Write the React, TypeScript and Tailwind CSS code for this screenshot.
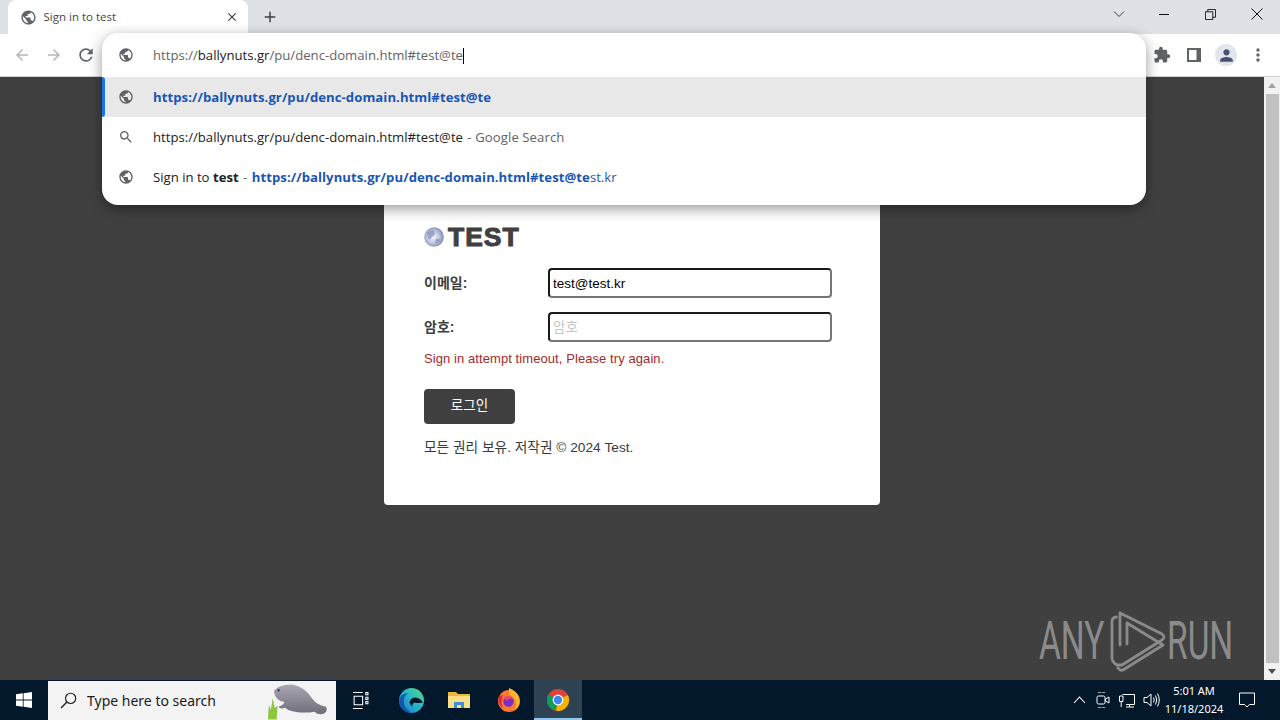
import React from "react";
import { MdPublic, MdSearch, MdExtension, MdPerson, MdArrowBack, MdArrowForward, MdRefresh, MdMoreVert, MdClose, MdAdd } from "react-icons/md";

const ui = "font-['Open_Sans','Noto_Sans',sans-serif]";
const page = "font-['Liberation_Sans','Noto_Sans_CJK_KR',sans-serif]";

function Field({ label, value, placeholder }: { label: string; value?: string; placeholder?: string }) {
  return (
    <div className="flex items-center h-[30px]">
      <label className="w-[124px] text-[14px] font-bold text-[#404040]">{label}</label>
      <input
        readOnly
        value={value ?? ""}
        placeholder={placeholder}
        className="w-[284px] h-[30px] px-[3px] rounded-[4px] border-2 border-t-[#1a1a1a] border-l-[#1a1a1a] border-r-[#767676] border-b-[#767676] text-[13.5px] text-black placeholder:text-[#c4c4c4] bg-white outline-none"
      />
    </div>
  );
}

function Row({ selected, icon, children }: { selected?: boolean; icon: React.ReactNode; children: React.ReactNode }) {
  return (
    <div className={`relative flex items-center h-10 pl-[16px] ${selected ? "bg-[#e8e8e8]" : ""}`}>
      {selected && <div className="absolute left-0 top-0 bottom-0 w-[3px] bg-[#1a73e8] rounded-r-[3px]" />}
      <span className="w-[35px] text-[#5f6368] text-[16px] flex">{icon}</span>
      <div className="pt-[2px] text-[13.15px] text-[#202124] whitespace-nowrap">{children}</div>
    </div>
  );
}

function Chrome() {
  return (
    <svg viewBox="0 0 24 24" className="w-[24px] h-[24px]">
      <circle cx="12" cy="12" r="11" fill="#db4437" />
      <path d="M12 12 L2.5 6.5 A11 11 0 0 0 10 22.8 Z" fill="#0f9d58" />
      <path d="M12 12 L21.8 7 A11 11 0 0 1 10 22.8 Z" fill="#f4b400" />
      <circle cx="12" cy="12" r="5.4" fill="#fff" />
      <circle cx="12" cy="12" r="4.2" fill="#4285f4" />
    </svg>
  );
}

export default function App() {
  return (
    <div className={`relative w-[1280px] h-[720px] overflow-hidden flex flex-col bg-[#404040] ${ui}`}>
      {/* Tab strip */}
      <div className="h-[34px] bg-[#dee1e6] flex items-start pl-2 shrink-0">
        <div className="w-[240px] h-[34px] bg-white rounded-t-[8px] flex items-center pl-3 pr-[10px] text-[#45474a]">
          <MdPublic className="w-[17px] h-[17px] text-[#5f6368] -ml-[0.5px]" />
          <span className="ml-[7px] text-[11.5px] flex-1">Sign in to test</span>
          <MdClose className="w-[14px] h-[14px] text-[#3c4043] mr-[-1px]" />
        </div>
        <MdAdd className="ml-[13px] mt-[8px] w-[18px] h-[18px] text-[#3c4043]" />
        <div className="flex-1" />
        <div className="flex items-center h-[28px] text-[#202124]">
          <svg viewBox="0 0 12 12" className="w-[12px] h-[12px] mr-[33px]"><path d="M1 3.5 L6 8.5 L11 3.5" fill="none" stroke="#3c4043" strokeWidth="1" /></svg>
          <svg viewBox="0 0 12 12" className="w-[12px] h-[12px] mr-[35px]"><path d="M1 6.5 H11" stroke="#111" strokeWidth="1" /></svg>
          <svg viewBox="0 0 12 12" className="w-[11px] h-[11px] mr-[35px]"><path d="M.5 3 H8.5 V11.5 H.5 Z M3 3 V.5 H11.5 V9 H8.5" fill="none" stroke="#111" strokeWidth="1" /></svg>
          <svg viewBox="0 0 12 12" className="w-[12px] h-[12px] mr-[17px]"><path d="M.5 .5 L11.5 11.5 M11.5 .5 L.5 11.5" stroke="#111" strokeWidth="1" /></svg>
        </div>
      </div>

      {/* Toolbar */}
      <div className="h-[43px] bg-white border-b border-[#d0d2d6] flex items-center shrink-0 pl-[13px] pr-[12px] text-[#5f6368]">
        <MdArrowBack className="w-[18px] h-[18px] text-[#b4b6ba]" />
        <MdArrowForward className="ml-[14px] w-[18px] h-[18px] text-[#b4b6ba]" />
        <MdRefresh className="ml-[13px] w-[20px] h-[20px] text-[#5f6368]" />
        <div className="flex-1" />
        <MdExtension className="w-[18px] h-[18px]" />
        <svg viewBox="0 0 14 14" className="ml-[16px] w-[14px] h-[14px]"><path fillRule="evenodd" d="M0 0 H14 V14 H0 Z M2 2 V12 H9.5 V2 Z" fill="#5f6368" /></svg>
        <div className="ml-[14px] w-[22px] h-[22px] rounded-full bg-[#e3e5ec] flex items-center justify-center">
          <MdPerson className="w-[19px] h-[19px] text-[#4a5070]" />
        </div>
        <MdMoreVert className="ml-[11px] w-[20px] h-[20px]" />
      </div>

      {/* Page + scrollbar */}
      <div className="flex-1 flex min-h-0">
        <div className={`flex-1 overflow-hidden flex flex-col items-center ${page}`}>
          <div className="mt-[100px] w-[496px] h-[328px] bg-white rounded-[4px] px-10 pt-[49px] shrink-0">
            <div className="flex items-center h-[22px]">
              <svg viewBox="0 0 20 20" className="w-[20px] h-[20px]">
                <defs>
                  <radialGradient id="g" cx="45%" cy="50%" r="55%"><stop offset="0%" stopColor="#f4f5fb" /><stop offset="55%" stopColor="#c3c8e0" /><stop offset="100%" stopColor="#8088b4" /></radialGradient>
                </defs>
                <circle cx="10" cy="10" r="9.8" fill="url(#g)" />
                <path d="M3 6 Q7 2 10 4 Q12 8 8 10 Q6 14 4 11 Z M12 12 Q15 11 16 13 Q14 17 11 16 Z" fill="#7f87ad" opacity=".65" />
              </svg>
              <span className="ml-[4px] text-[26.5px] font-['Liberation_Sans',sans-serif] font-bold text-[#404040] leading-none [-webkit-text-stroke:1px_#404040] tracking-[1px]">TEST</span>
            </div>
            <div className="mt-[20px] flex flex-col gap-[14px]">
              <Field label="이메일:" value="test@test.kr" />
              <Field label="암호:" placeholder="암호" />
            </div>
            <div className="mt-[9px] text-[13px] leading-[15px] text-[#a52a2a] tracking-[0.08px]">Sign in attempt timeout, Please try again.</div>
            <button className="mt-[23px] block w-[91px] h-[35px] rounded-[4px] bg-[#404040] text-white text-[13.5px]">로그인</button>
            <div className="mt-[16px] text-[13.7px] leading-[16px] text-[#3a3a3a]">모든 권리 보유. 저작권 © 2024 Test.</div>
          </div>
        </div>
        {/* Scrollbar */}
        <div className="w-4 bg-[#f1f1f1] flex flex-col items-center shrink-0">
          <div className="h-[17px] flex items-center justify-center"><div className="border-x-[4px] border-x-transparent border-b-[5px] border-b-[#a3a3a3]" /></div>
          <div className="w-[13px] flex-1 bg-[#c1c1c1]" />
          <div className="h-[17px] flex items-center justify-center"><div className="border-x-[4px] border-x-transparent border-t-[5px] border-t-[#505050]" /></div>
        </div>
      </div>

      {/* Taskbar */}
      <div className="h-10 bg-[#04182b] flex items-center shrink-0 text-white">
        <div className="w-12 flex justify-center">
          <svg viewBox="0 0 16 16" className="w-[16px] h-[16px]"><path d="M0 2.3 L6.8 1.3 V7.5 H0 Z M7.6 1.2 L16 0 V7.5 H7.6 Z M0 8.4 H6.8 V14.7 L0 13.7 Z M7.6 8.4 H16 V16 L7.6 14.8 Z" fill="#fff" /></svg>
        </div>
        <div className="relative w-[288px] h-[39px] mt-[1px] bg-[#f3f3f3] flex items-center pl-[12px] text-[#1b1b1b] overflow-hidden">
          <svg viewBox="0 0 16 16" className="w-[17px] h-[17px]"><circle cx="10" cy="6" r="4.8" fill="none" stroke="#222" strokeWidth="1.1" /><path d="M6.5 9.5 L1 15" stroke="#222" strokeWidth="1.3" /></svg>
          <span className="ml-[10px] text-[14px] font-['Noto_Sans',sans-serif]">Type here to search</span>
          <svg viewBox="0 0 66 39" className="absolute left-[218px] top-0 w-[64px] h-[39px]">
            <defs>
              <linearGradient id="m" x1="0" y1="0" x2="0" y2="1"><stop offset="0%" stopColor="#a9a7b2" /><stop offset="100%" stopColor="#6f6d78" /></linearGradient>
            </defs>
            <path d="M2 39 L3 24 L5 29 L7 17 L9 27 L12 25 L11 39 Z" fill="#8ec641" />
            <path d="M8 10 Q12 3 27 3 Q40 5 48 18 Q52 24 62 26 Q64 30 60 33 Q54 35 50 31 Q40 33 30 31 Q22 30 20 27 Q14 29 13 26 Q18 24 19 21 Q10 20 8 10 Z" fill="url(#m)" />
            <circle cx="13" cy="9" r="1.2" fill="#2b2b33" />
          </svg>
        </div>
        <div className="w-[48px] flex justify-center">
          <svg viewBox="0 0 16 16" className="w-[17px] h-[17px]"><path d="M1 .5 H10 M1 15.5 H10 M2 4 H10 V12 H2 Z M13 .5 H15 V2.5 H13 Z M13 5 H15 V7 H13 Z M13 9 H15 V11 H13 Z" fill="none" stroke="#fff" strokeWidth="1" /></svg>
        </div>
        <div className="w-[50px] ml-[2px] flex justify-center">
          <svg viewBox="0 0 24 24" className="w-[25px] h-[25px]">
            <defs>
              <linearGradient id="e" x1="1" y1="0" x2="0" y2="1"><stop offset="0%" stopColor="#5fdc7a" /><stop offset="45%" stopColor="#27b8c8" /><stop offset="100%" stopColor="#1673d0" /></linearGradient>
            </defs>
            <circle cx="12" cy="12" r="12" fill="url(#e)" />
            <path d="M10 14 Q11 9 16 9 Q21 10 23 14 Q18 15 15 14 Q12 15 13 18 Q11 17 10 14 Z" fill="#04182b" />
            <path d="M0 13 Q1 5 9 5 Q3 8 5 16 Q7 21 13 24 Q2 24 0 13 Z" fill="#1258a8" />
          </svg>
        </div>
        <div className="w-[46px] flex justify-center">
          <svg viewBox="0 0 22 20" className="w-[22px] h-[20px]">
            <path d="M0 2 H8 L10 4 H22 V18 H0 Z" fill="#e9b93a" />
            <path d="M0 6 H22 V18 H0 Z" fill="#fbdf86" />
            <path d="M6 12 H16 V18 H13 V15 H9 V18 H6 Z" fill="#3f8fd6" />
          </svg>
        </div>
        <div className="w-[52px] pl-[1px] flex justify-center">
          <svg viewBox="0 0 24 24" className="w-[24px] h-[24px]">
            <circle cx="12" cy="13" r="11" fill="#ff7a2b" />
            <path d="M12 0 Q20 3 22 10 Q24 18 18 22 Q22 12 12 6 Z" fill="#ffb52e" />
            <path d="M2 8 Q0 16 6 21 Q3 13 6 7 Z" fill="#e3254f" />
            <circle cx="11.5" cy="13.5" r="5.2" fill="#7a2fc4" />
            <path d="M7 9 Q12 6 16 11 Q11 10 9 13 Z" fill="#f3486d" />
          </svg>
        </div>
        <div className="relative w-[48px] h-10 bg-[#2e4253] flex items-center justify-center">
          <Chrome />
          <div className="absolute bottom-0 left-0 right-0 h-[2px] bg-[#8fc6ee]" />
        </div>
        <div className="flex-1" />
        {/* Tray */}
        <svg viewBox="0 0 12 8" className="w-[13px] h-[8px] mr-[9px]"><path d="M.5 7 L6 1 L11.5 7" fill="none" stroke="#fff" strokeWidth="1.1" /></svg>
        <svg viewBox="0 0 16 16" className="w-[16px] h-[16px] mr-[8px]"><path d="M3 .5 Q7 -.5 10 .5 M3 15.5 Q7 16.5 10 15.5" fill="none" stroke="#fff" strokeWidth=".8" /><rect x="2" y="4" width="8" height="8" rx="1.5" fill="none" stroke="#fff" /><path d="M10.5 7 L14 5 V11 L10.5 9 Z" fill="none" stroke="#fff" /></svg>
        <svg viewBox="0 0 16 16" className="w-[16px] h-[16px] mr-[8px]"><path d="M3.5 2.5 H15.5 V12.5 H7 M7 15 H15 M10.5 12.5 V15 M.5 4 H4 V9.5 H.5 Z M2.2 9.5 V15" fill="none" stroke="#fff" strokeWidth="1" /></svg>
        <svg viewBox="0 0 18 16" className="w-[18px] h-[16px] mr-[1px]"><path d="M1 5.5 H4 L8 2 V14 L4 10.5 H1 Z M10.5 5.5 Q12 8 10.5 10.5 M12.5 3.5 Q15 8 12.5 12.5 M14.5 1.5 Q18 8 14.5 14.5" fill="none" stroke="#fff" strokeWidth="1" /></svg>
        <div className="w-[64px] text-center text-[11px] leading-[18px] font-['Noto_Sans',sans-serif]">
          <div>5:01 AM</div>
          <div>11/18/2024</div>
        </div>
        <svg viewBox="0 0 16 16" className="ml-[13px] mr-[25px] w-[16px] h-[16px]"><path d="M.5 1 H15.5 V12.5 H10.5 L8 15 L5.5 12.5 H.5 Z" fill="none" stroke="#fff" strokeWidth="1" /></svg>
      </div>

      {/* Omnibox popup */}
      <div className="absolute left-[102px] top-[33px] w-[1044px] h-[172px] bg-white rounded-[16px] shadow-[0_4px_14px_rgba(0,0,0,0.4)] overflow-hidden">
        <div className="flex items-center h-11 pl-[16px]">
          <span className="w-[35px] text-[#5f6368] text-[16px] flex"><MdPublic /></span>
          <div className="pt-[2px] text-[13.15px] text-[#5f6368] whitespace-nowrap flex items-center">
            <span>https://</span><span className="text-[#202124]">ballynuts.gr</span><span>/pu/denc-domain.html#test@te</span>
            <span className="inline-block w-px h-[16px] bg-black" />
          </div>
        </div>
        <Row selected icon={<MdPublic />}>
          <span className="font-bold text-[#1a56b4] tracking-[0.05px]">https://ballynuts.gr/pu/denc-domain.html#test@te</span>
        </Row>
        <Row icon={<MdSearch />}>
          https://ballynuts.gr/pu/denc-domain.html#test@te <span className="text-[#5f6368] ml-[1px] tracking-[0.08px]">- Google Search</span>
        </Row>
        <Row icon={<MdPublic />}>
          Sign in to <b>test</b> <span className="text-[#5f6368] mx-[1px]">-</span> <span className="font-bold text-[#1a56b4] tracking-[0.05px]">https://ballynuts.gr/pu/denc-domain.html#test@te</span><span className="text-[#1a56b4]">st.kr</span>
        </Row>
      </div>

      {/* Watermark */}
      <div className="absolute left-[1030px] top-[606px] w-[210px] h-[70px] flex items-center pointer-events-none text-[#8b8b8b] font-['Roboto',sans-serif]">
        <span className="text-[54px] font-normal leading-none origin-left scale-x-[.62] ml-[9px]">ANY</span>
        <svg viewBox="0 0 56 62" className="absolute left-[80px] top-[4px] w-[56px] h-[62px]">
          <path d="M10 3 V35 M10 3 L52 24 Q56 27 52 30 L12 55 M17 13 V34 M17 13 L53 35 L13 60 Q10 61 8 58 M6.5 7 Q2 7 2 12 V48 Q2 52 7 55 L12 55" fill="none" stroke="#8b8b8b" strokeWidth="2.8" strokeLinejoin="round" strokeLinecap="round" />
        </svg>
        <span className="absolute left-[137px] text-[54px] font-normal leading-none origin-left scale-x-[.62]">RUN</span>
      </div>
    </div>
  );
}
